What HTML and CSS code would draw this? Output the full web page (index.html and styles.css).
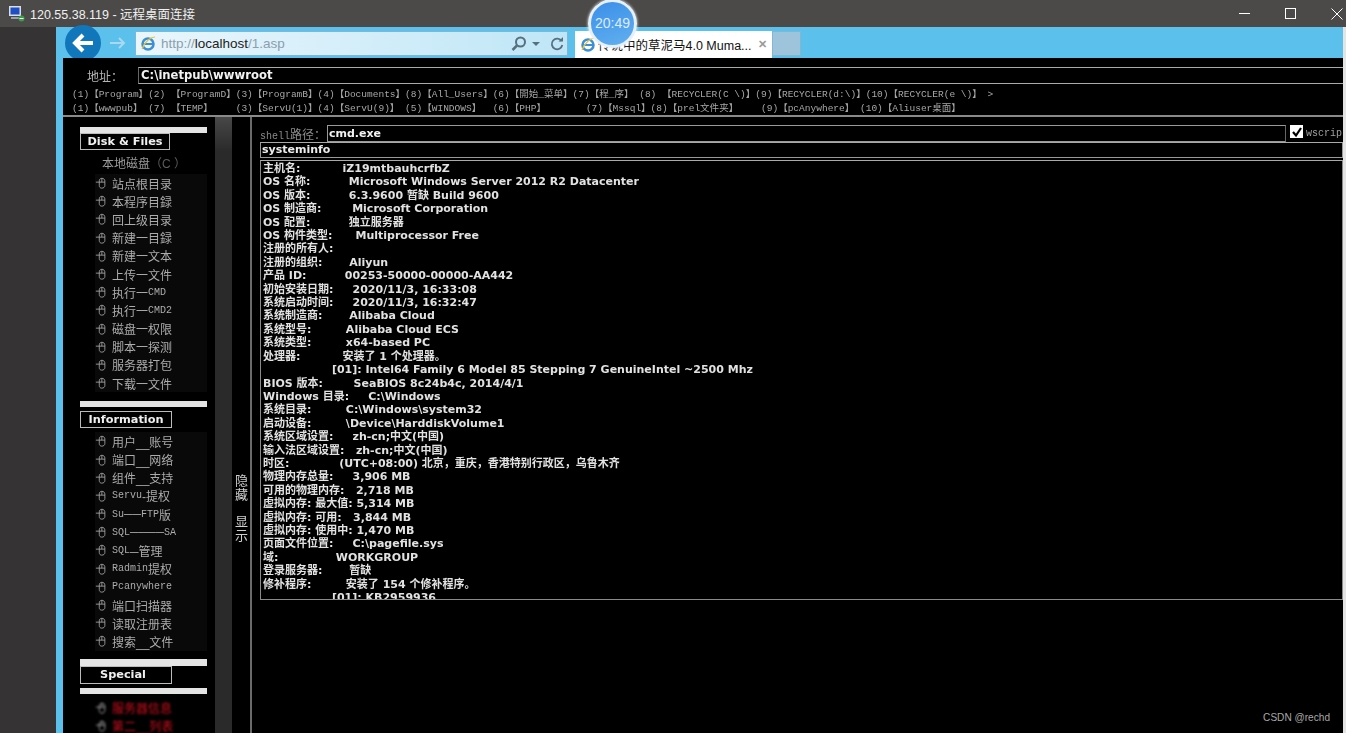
FILE: index.html
```html
<!doctype html>
<html lang="en">
  <head>
    <meta charset="UTF-8" />
    <title>120.55.38.119 - 远程桌面连接</title>
    <link rel="stylesheet" href="styles.css">
  </head>
  <body>
    <svg class="defs" width="0" height="0">
      <symbol id="hand" viewBox="0 0 14 14">
        <path d="M1 6h4M5 4.500c0-1.500 1-3 3-3s3.500 1.500 3.500 3V10c0 1.800-1.500 3-3.500 3s-3-1.200-3-3zM5 6h6.500M8 1.500V6" fill="none" stroke="currentColor" stroke-width="1"/>
      </symbol>
      <symbol id="ie-logo" viewBox="0 0 17 17">
        <circle cx="8" cy="9" r="5.500" fill="none" stroke="#3b8fd6" stroke-width="2.500"/>
        <path d="M3 9h10" stroke="#3b8fd6" stroke-width="2"/>
        <path d="M2 14C5 6 11 2 15 2" fill="none" stroke="#e8c33a" stroke-width="1.200"/>
      </symbol>
    </svg>

    <header class="titlebar">
      <div class="title">
        <svg class="rdp-icon" width="16" height="16" viewBox="0 0 16 16">
          <rect x="0" y="0" width="12" height="10" fill="#d8dde6"/>
          <rect x="1.500" y="1.500" width="9" height="7" fill="#1f4fc4"/>
          <rect x="2" y="11" width="8" height="2" fill="#9aa0a8"/>
          <circle cx="12.500" cy="12.500" r="3" fill="#3c9a4c"/>
          <path d="M10.500 12.500h4" stroke="#fff" stroke-width="1"/>
        </svg>
        <span>120.55.38.119 - 远程桌面连接</span>
      </div>
      <div class="win-buttons">
        <span class="win-min"></span>
        <span class="win-max"></span>
        <svg class="win-close" width="12" height="12" viewBox="0 0 12 12">
          <path d="M.5.500l11 11M11.500.5l-11 11" stroke="#fff" stroke-width="1"/>
        </svg>
      </div>
    </header>

    <div class="desktop">
      <div class="gutter"></div>
      <div class="browser">
        <div class="toolbar">
          <div class="nav-buttons">
            <div class="back">
              <svg width="24" height="20" viewBox="0 0 24 20">
                <path d="M22 10H5M12 2l-8 8 8 8" fill="none" stroke="#fff" stroke-width="4"/>
              </svg>
            </div>
            <svg class="forward" width="18" height="14" viewBox="0 0 18 14">
              <path d="M1 7h14M10 2l5 5-5 5" fill="none" stroke="#a9d8ef" stroke-width="2"/>
            </svg>
          </div>
          <div class="urlbar">
            <svg class="ie" width="17" height="17"><use href="#ie-logo"/></svg>
            <span class="url"><span class="dim">http://</span>localhost<span class="dim">/1.asp</span></span>
            <div class="url-tools">
              <svg width="16" height="16" viewBox="0 0 16 16">
                <circle cx="9.500" cy="6" r="4.500" fill="none" stroke="#55707f" stroke-width="2"/>
                <path d="M6 9.500L1.500 14" stroke="#55707f" stroke-width="2.500"/>
              </svg>
              <span class="caret"></span>
              <svg class="reload" width="14" height="14" viewBox="0 0 14 14">
                <path d="M11.500 4A5.300 5.300 0 1 0 12.300 8" fill="none" stroke="#55707f" stroke-width="1.800"/>
                <path d="M8.500 4.500h4.500V0z" fill="#55707f"/>
              </svg>
            </div>
          </div>
          <div class="tab">
            <svg class="ie" width="17" height="17"><use href="#ie-logo"/></svg>
            <span class="tab-title">传说中的草泥马4.0 Muma...</span>
            <span class="tab-close">✕</span>
          </div>
          <div class="new-tab"></div>
        </div>

        <main class="page">
          <div class="address-row">
            <label class="address-label">地址：</label>
            <div class="address-input">C:\inetpub\wwwroot</div>
          </div>
          <div class="quick-links">
<div class="link-row">(1)【Program】(2) 【ProgramD】(3)【ProgramB】(4)【Documents】(8)【All_Users】(6)【開始_菜单】(7)【程_序】 (8) 【RECYCLER(C \)】(9)【RECYCLER(d:\)】(10)【RECYCLER(e \)】 &gt;</div>
<div class="link-row">(1)【wwwpub】 (7) 【TEMP】    (3)【ServU(1)】(4)【ServU(9)】 (5)【WINDOWS】  (6)【PHP】       (7)【Mssql】(8)【prel文件夹】    (9)【pcAnywhere】 (10)【Aliuser桌面】</div>
          </div>

          <div class="workspace">
            <nav class="sidebar">
              <div class="bar"></div>
              <h3 class="side-title">Disk &amp; Files</h3>
              <div class="drive">本地磁盘<span class="drive-letter">（C ）</span></div>
              <ul class="menu">
                <li><svg class="hand"><use href="#hand"/></svg>站点根目录</li>
                <li><svg class="hand"><use href="#hand"/></svg>本程序目録</li>
                <li><svg class="hand"><use href="#hand"/></svg>回上级目录</li>
                <li><svg class="hand"><use href="#hand"/></svg>新建一目録</li>
                <li><svg class="hand"><use href="#hand"/></svg>新建一文本</li>
                <li><svg class="hand"><use href="#hand"/></svg>上传一文件</li>
                <li><svg class="hand"><use href="#hand"/></svg>执行一<span class="latin">CMD</span></li>
                <li><svg class="hand"><use href="#hand"/></svg>执行一<span class="latin">CMD2</span></li>
                <li><svg class="hand"><use href="#hand"/></svg>磁盘一权限</li>
                <li><svg class="hand"><use href="#hand"/></svg>脚本一探测</li>
                <li><svg class="hand"><use href="#hand"/></svg>服务器打包</li>
                <li><svg class="hand"><use href="#hand"/></svg>下载一文件</li>
              </ul>
              <div class="bar bar-info"></div>
              <h3 class="side-title title-info">Information</h3>
              <ul class="menu">
                <li><svg class="hand"><use href="#hand"/></svg>用户__账号</li>
                <li><svg class="hand"><use href="#hand"/></svg>端口__网络</li>
                <li><svg class="hand"><use href="#hand"/></svg>组件__支持</li>
                <li><svg class="hand"><use href="#hand"/></svg><span class="latin">Servu</span>-提权</li>
                <li><svg class="hand"><use href="#hand"/></svg><span class="latin">Su</span>──<span class="latin">FTP</span>版</li>
                <li><svg class="hand"><use href="#hand"/></svg><span class="latin">SQL</span>────<span class="latin">SA</span></li>
                <li><svg class="hand"><use href="#hand"/></svg><span class="latin">SQL</span>─管理</li>
                <li><svg class="hand"><use href="#hand"/></svg><span class="latin">Radmin</span>提权</li>
                <li><svg class="hand"><use href="#hand"/></svg><span class="latin">Pcanywhere</span></li>
                <li><svg class="hand"><use href="#hand"/></svg>端口扫描器</li>
                <li><svg class="hand"><use href="#hand"/></svg>读取注册表</li>
                <li><svg class="hand"><use href="#hand"/></svg>搜索__文件</li>
              </ul>
              <div class="bar bar-special"></div>
              <h3 class="side-title title-special">Special</h3>
              <div class="bar bar-after"></div>
              <ul class="menu menu-red">
                <li><svg class="hand"><use href="#hand"/></svg>服务器信息</li>
                <li><svg class="hand"><use href="#hand"/></svg>第二__列表</li>
              </ul>
            </nav>
            <div class="side-scroll"></div>
            <div class="side-toggle">
              <span>隐藏</span>
              <span>显示</span>
            </div>

            <section class="shell">
              <div class="shell-path">
                <span class="shell-label"><span class="latin">shell</span>路径：</span>
                <div class="shell-input">cmd.exe</div>
                <span class="check">
                  <svg width="12" height="12" viewBox="0 0 12 12"><path d="M2 6l3 3.500L10 2" fill="none" stroke="#000" stroke-width="2.200"/></svg>
                </span>
                <span class="check-label">wscript</span>
              </div>
              <div class="command">systeminfo</div>
<pre class="output">主机名:           iZ19mtbauhcrfbZ
OS 名称:          Microsoft Windows Server 2012 R2 Datacenter
OS 版本:          6.3.9600 暂缺 Build 9600
OS 制造商:        Microsoft Corporation
OS 配置:          独立服务器
OS 构件类型:      Multiprocessor Free
注册的所有人:
注册的组织:       Aliyun
产品 ID:          00253-50000-00000-AA442
初始安装日期:     2020/11/3, 16:33:08
系统启动时间:     2020/11/3, 16:32:47
系统制造商:       Alibaba Cloud
系统型号:         Alibaba Cloud ECS
系统类型:         x64-based PC
处理器:           安装了 1 个处理器。
                  [01]: Intel64 Family 6 Model 85 Stepping 7 GenuineIntel ~2500 Mhz
BIOS 版本:        SeaBIOS 8c24b4c, 2014/4/1
Windows 目录:     C:\Windows
系统目录:         C:\Windows\system32
启动设备:         \Device\HarddiskVolume1
系统区域设置:     zh-cn;中文(中国)
输入法区域设置:   zh-cn;中文(中国)
时区:             (UTC+08:00) 北京，重庆，香港特别行政区，乌鲁木齐
物理内存总量:     3,906 MB
可用的物理内存:   2,718 MB
虚拟内存: 最大值: 5,314 MB
虚拟内存: 可用:   3,844 MB
虚拟内存: 使用中: 1,470 MB
页面文件位置:     C:\pagefile.sys
域:               WORKGROUP
登录服务器:       暂缺
修补程序:         安装了 154 个修补程序。
                  [01]: KB2959936</pre>
            </section>
          </div>
        </main>
      </div>
    </div>

    <div class="clock">20:49</div>
    <div class="watermark">CSDN @rechd</div>
  </body>
</html>
```
FILE: styles.css
```css
* {
  box-sizing: border-box;
}

html,
body {
  margin: 0;
  height: 733px;
  overflow: hidden;
  background-color: #1a1a1a;
  font-family: "Liberation Sans", "Noto Sans CJK SC", sans-serif;
}

.defs {
  display: none;
}

.titlebar {
  display: flex;
  justify-content: space-between;
  align-items: center;
  height: 27px;
  padding-left: 9px;
  background-color: #4b4a48;
  color: #f0f0f0;
  font-size: 12.500px;
}

.title {
  display: flex;
  align-items: center;
  gap: 5px;
}

.win-buttons {
  display: flex;
  align-items: center;
  gap: 35px;
  padding-right: 3px;
}

.win-min {
  width: 11px;
  border-top: 1px solid #fff;
}

.win-max {
  width: 11px;
  height: 11px;
  border: 1px solid #fff;
}

.desktop {
  display: flex;
  height: 706px;
  background-color: #e4e4e4;
}

.gutter {
  flex-shrink: 0;
  width: 56px;
  background-color: #353333;
}

.browser {
  flex: 1;
  min-width: 0;
  display: flex;
  flex-direction: column;
  margin-right: 3px;
  background-color: #5bc1ec;
}

.toolbar {
  display: flex;
  height: 31px;
  flex-shrink: 0;
}

.nav-buttons {
  display: flex;
  align-items: center;
  width: 79px;
  padding-left: 9px;
}

.back {
  display: flex;
  justify-content: center;
  align-items: center;
  width: 36px;
  height: 36px;
  border-radius: 50%;
  background-color: #1176ba;
}

.forward {
  margin-left: 8px;
}

.urlbar {
  display: flex;
  align-items: center;
  width: 433px;
  height: 25px;
  margin-top: 4px;
  padding: 0 3px 0 4px;
  background: linear-gradient(90deg, #eaf6fc, #bfe6f7);
  border: 1px solid #7fb8d4;
  font-size: 13.500px;
}

.url {
  margin-left: 4px;
  color: #222;
}

.dim {
  color: #8aa0ac;
}

.url-tools {
  display: flex;
  align-items: center;
  gap: 5px;
  margin-left: auto;
}

.caret {
  border: 4px solid transparent;
  border-top: 4px solid #55707f;
  border-bottom: 0;
}

.reload {
  margin-left: 5px;
}

.tab {
  display: flex;
  align-items: center;
  width: 197px;
  height: 27px;
  margin: 4px 0 0 7px;
  padding: 0 5px;
  background-color: #fff;
  font-size: 12.500px;
  color: #111;
}

.tab-title {
  margin-left: 1px;
  white-space: nowrap;
}

.tab-close {
  margin-left: auto;
  color: #9a9a9a;
  font-size: 11px;
  font-weight: bold;
}

.new-tab {
  width: 29px;
  height: 25px;
  margin-top: 4px;
  background-color: #9dc4da;
  border: 1px solid #7fb8d4;
}

.page {
  flex: 1;
  margin-left: 7px;
  background-color: #000;
  color: #e6e6e6;
  overflow: hidden;
  min-height: 0;
  filter: blur(0.350px);
}

.address-row {
  display: flex;
  align-items: center;
  height: 26px;
  padding-left: 24px;
  padding-top: 9px;
}

.address-label {
  width: 51px;
  color: #b5b5b5;
  font-size: 12px;
}

.address-input {
  flex: 1;
  height: 17px;
  padding-left: 2px;
  border-top: 1px solid #aaa;
  border-left: 1px solid #666;
  border-bottom: 1px solid #aaa;
  color: #f2f2f2;
  font-family: "DejaVu Sans", "Noto Sans CJK SC", sans-serif;
  font-size: 11.600px;
  font-weight: bold;
  line-height: 15px;
}

.quick-links {
  height: 33px;
  padding: 4px 0 0 9px;
  border-bottom: 2px solid #8a8a8a;
}

.link-row {
  height: 14px;
  color: #a8a8a8;
  font-family: "Liberation Mono", "Noto Sans CJK SC", monospace;
  font-size: 9.530px;
  line-height: 14px;
  white-space: pre;
}

.workspace {
  display: flex;
  height: 616px;
}

.sidebar {
  flex-shrink: 0;
  width: 152px;
  padding: 10px 8px 0 17px;
  background-color: #000;
}

.bar {
  height: 6px;
  background-color: #e4e4e4;
}

.bar-info {
  margin-top: 9px;
}

.bar-special {
  height: 7px;
  margin-top: 8px;
}

.bar-after {
  margin-top: 4px;
}

.side-title {
  width: 90px;
  height: 17px;
  margin: 0;
  border: 1px solid #bbb;
  color: #f0f0f0;
  font-family: "DejaVu Sans", sans-serif;
  font-size: 11.300px;
  font-weight: bold;
  line-height: 15px;
  text-align: center;
}

.title-info {
  width: 92px;
  margin-top: 4px;
  margin-bottom: 4px;
}

.title-special {
  width: 92px;
  height: 18px;
  padding-right: 6px;
}

.drive {
  height: 24px;
  padding-left: 22px;
  color: #9a9a9a;
  font-size: 12px;
  line-height: 28px;
}

.drive-letter {
  color: #5c5c5c;
}

.menu {
  margin: 0;
  padding: 0 0 0 15px;
  list-style: none;
}

.menu li {
  display: flex;
  align-items: center;
  height: 18.200px;
  color: #acacac;
  background-color: #090909;
  font-size: 12px;
  white-space: nowrap;
}

.hand {
  width: 12px;
  height: 12px;
  margin-right: 5px;
  flex-shrink: 0;
  color: #a6a6a6;
}

.latin {
  font-family: "Liberation Mono", monospace;
  font-size: 10px;
}

.menu-red {
  margin-top: 5px;
}

.menu-red li {
  color: #d0101c;
  background-color: transparent;
  filter: blur(1px);
}

.menu-red .hand {
  color: #b0b0b0;
}

.side-scroll {
  flex-shrink: 0;
  width: 17px;
  background: linear-gradient(#484848, #2a2a2a 34px);
}

.side-toggle {
  flex-shrink: 0;
  display: flex;
  flex-direction: column;
  gap: 13px;
  width: 20px;
  padding-top: 357px;
  padding-left: 3px;
  border-right: 2px solid #6a6a6a;
  color: #cfcfcf;
  font-size: 13px;
  line-height: 14px;
}

.shell {
  flex: 1;
  min-width: 0;
  padding: 8px 0 0 8px;
  font-family: "DejaVu Sans", "Noto Sans CJK SC", sans-serif;
  font-size: 11px;
  font-weight: bold;
}

.shell-path {
  display: flex;
  align-items: center;
  height: 17px;
}

.shell-label {
  flex-shrink: 0;
  width: 67px;
  color: #8a8a8a;
  font-family: "Noto Sans CJK SC", sans-serif;
  font-weight: normal;
  font-size: 12px;
}

.shell-input {
  flex-shrink: 0;
  width: 959px;
  height: 17px;
  padding-left: 1px;
  border: 1px solid #999;
  border-right-color: #666;
  line-height: 15px;
  color: #f2f2f2;
}

.check {
  flex-shrink: 0;
  display: flex;
  justify-content: center;
  align-items: center;
  width: 13px;
  height: 13px;
  margin: -4px 0 0 4px;
  background-color: #fff;
}

.check-label {
  flex-shrink: 0;
  margin-left: 3px;
  color: #a0a0a0;
  font-family: "Liberation Mono", monospace;
  font-size: 10px;
  font-weight: normal;
}

.command {
  height: 16px;
  padding-left: 1px;
  border: 1px solid #999;
  border-top-color: #aaa;
  line-height: 14px;
  color: #ededed;
}

.output {
  height: 440px;
  margin: 2px 0 0;
  padding: 1px 0 0 2px;
  border: 1px solid #8a8a8a;
  border-top-color: #aaa;
  overflow: hidden;
  font: inherit;
  color: #e2e2e2;
  line-height: 13.400px;
}

.clock {
  position: absolute;
  left: 588px;
  top: -1px;
  width: 49px;
  height: 49px;
  border: 3px solid #e6f0fa;
  border-radius: 50%;
  background: linear-gradient(160deg, #3a8ee8, #62b0f0);
  box-shadow: 0 0 3px #fff;
  color: #dcecff;
  font-size: 14px;
  line-height: 43px;
  text-align: center;
}

.watermark {
  position: absolute;
  right: 16px;
  top: 712px;
  color: #a8a8a8;
  font-size: 10.100px;
}
```
